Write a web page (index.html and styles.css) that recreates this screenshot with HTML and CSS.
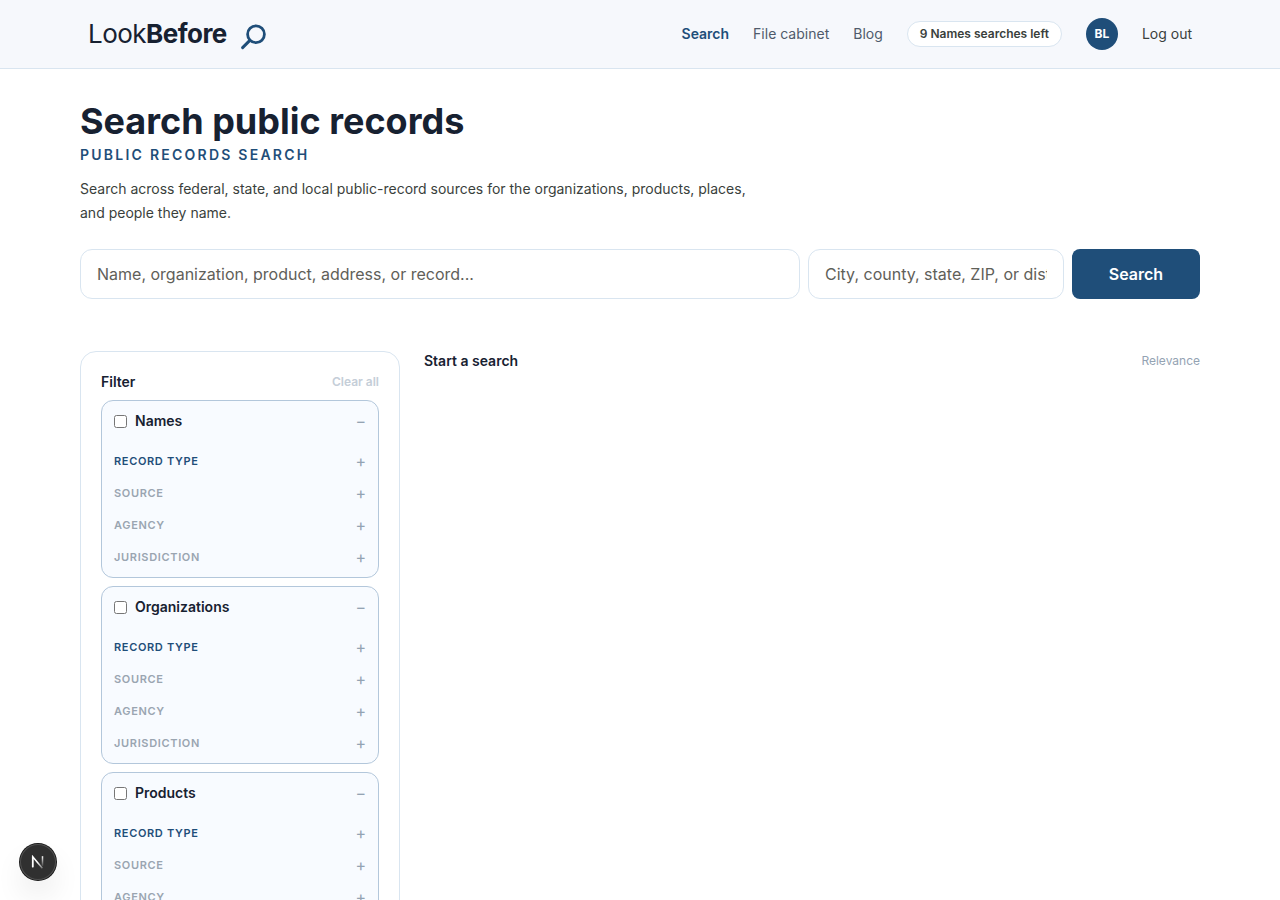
FILE: index.html
```html
<!DOCTYPE html>
<html lang="en">

<head>
    <meta charset="UTF-8">
    <meta name="viewport" content="width=device-width, initial-scale=1.0">
    <title>LookBefore</title>
    <link rel="stylesheet" href="styles.css">
</head>

<body>
    <header class="header">
        <div class="header-inner">
            <a class="logo" href="#">
                <span class="logo-text">Look<b>Before</b></span>
                <svg class="logo-icon" width="28" height="28" viewBox="0 0 28 28" fill="none" stroke="currentColor" stroke-linecap="round">
                    <circle cx="17" cy="11.2" r="8.4" stroke-width="2.8" />
                    <path d="M10.6 17.6L3.6 24.6" stroke-width="3" />
                </svg>
            </a>
            <nav class="nav">
                <a class="nav-link active" href="#">Search</a>
                <a class="nav-link" href="#">File cabinet</a>
                <a class="nav-link" href="#">Blog</a>
                <span class="quota">9 Names searches left</span>
                <span class="avatar">BL</span>
                <button class="logout" type="button">Log out</button>
            </nav>
        </div>
    </header>
    <main class="page">
        <h1 class="title">Search public records</h1>
        <p class="eyebrow">Public records search</p>
        <p class="intro">Search across federal, state, and local public-record sources for the organizations, products, places, and people they name.</p>
        <form class="search-form">
            <input class="field" type="text" placeholder="Name, organization, product, address, or record...">
            <input class="field" type="text" placeholder="City, county, state, ZIP, or district">
            <button class="search-button" type="button">Search</button>
        </form>
        <div class="content">
            <aside class="filters">
                <div class="filters-head">
                    <h2 class="heading">Filter</h2>
                    <button class="clear" type="button">Clear all</button>
                </div>
                <section class="group">
                    <div class="group-head">
                        <label class="group-label"><input class="check" type="checkbox">Names</label>
                        <span class="sign">−</span>
                    </div>
                    <div class="facet enabled">Record type<span class="sign">+</span></div>
                    <div class="facet">Source<span class="sign">+</span></div>
                    <div class="facet">Agency<span class="sign">+</span></div>
                    <div class="facet">Jurisdiction<span class="sign">+</span></div>
                </section>
                <section class="group">
                    <div class="group-head">
                        <label class="group-label"><input class="check" type="checkbox">Organizations</label>
                        <span class="sign">−</span>
                    </div>
                    <div class="facet enabled">Record type<span class="sign">+</span></div>
                    <div class="facet">Source<span class="sign">+</span></div>
                    <div class="facet">Agency<span class="sign">+</span></div>
                    <div class="facet">Jurisdiction<span class="sign">+</span></div>
                </section>
                <section class="group">
                    <div class="group-head">
                        <label class="group-label"><input class="check" type="checkbox">Products</label>
                        <span class="sign">−</span>
                    </div>
                    <div class="facet enabled">Record type<span class="sign">+</span></div>
                    <div class="facet">Source<span class="sign">+</span></div>
                    <div class="facet">Agency<span class="sign">+</span></div>
                    <div class="facet">Jurisdiction<span class="sign">+</span></div>
                </section>
            </aside>
            <section class="results">
                <h2 class="heading">Start a search</h2>
                <span class="sort">Relevance</span>
            </section>
        </div>
    </main>
    <div class="dev-badge">
        <svg width="14" height="14" viewBox="0 0 14 14" fill="none" stroke-width="1.5">
            <defs>
                <linearGradient id="fade-diagonal" x1="7" y1="7" x2="12.5" y2="14" gradientUnits="userSpaceOnUse">
                    <stop stop-color="#fff" />
                    <stop offset="1" stop-color="#fff" stop-opacity="0.2" />
                </linearGradient>
                <linearGradient id="fade-stem" x1="11" y1="1" x2="11" y2="11" gradientUnits="userSpaceOnUse">
                    <stop stop-color="#fff" />
                    <stop offset="1" stop-color="#fff" stop-opacity="0.1" />
                </linearGradient>
            </defs>
            <path d="M1.7 12.3V1.7L11.4 13.3" stroke="url(#fade-diagonal)" />
            <path d="M1.7 12.3V1.7" stroke="#fff" />
            <path d="M11.5 1.2V11" stroke="url(#fade-stem)" />
        </svg>
    </div>
</body>

</html>
```

FILE: styles.css
```css
*,
*::before,
*::after {
    box-sizing: border-box;
}

body {
    margin: 0;
    height: 100vh;
    overflow: hidden;
    background-color: #fff;
    color: #172131;
    font-family: 'Inter', sans-serif;
    font-size: 14px;
    line-height: 20px;
}

h1,
h2,
p {
    margin: 0;
}

a {
    color: inherit;
    text-decoration: none;
}

button {
    padding: 0;
    border: 0;
    background: none;
    font: inherit;
}

.header {
    height: 69px;
    background-color: #f6f8fc;
    border-bottom: 1px solid #d9e5f0;
}

.header-inner {
    display: flex;
    align-items: center;
    justify-content: space-between;
    width: 1120px;
    height: 68px;
    margin: 0 auto;
    padding: 0 8px;
}

.logo {
    display: flex;
    align-items: center;
    gap: 12px;
}

.logo-text {
    font-size: 26px;
    font-weight: 400;
    line-height: 32px;
    letter-spacing: -0.52px;
}

.logo-text b {
    font-weight: 700;
}

.logo-icon {
    margin-top: 5px;
    color: #1f4e79;
}

.nav {
    display: flex;
    align-items: center;
    gap: 24px;
}

.nav-link {
    color: #4f5b6b;
}

.nav-link.active {
    color: #1f4e79;
    font-weight: 600;
}

.quota {
    padding: 4px 12px;
    background-color: #fff;
    border: 1px solid #d9e5f0;
    border-radius: 13px;
    color: #3a3f3c;
    font-size: 12px;
    font-weight: 600;
    line-height: 16px;
}

.avatar {
    width: 32px;
    height: 32px;
    border-radius: 50%;
    background-color: #1f4e79;
    color: #fff;
    font-size: 12px;
    font-weight: 700;
    line-height: 32px;
    text-align: center;
}

.logout {
    color: #3a3f3c;
}

.page {
    width: 1120px;
    margin: 0 auto;
    padding-top: 32px;
}

.title {
    font-size: 36px;
    font-weight: 700;
    line-height: 40px;
}

.eyebrow {
    margin-top: 4px;
    color: #1f4e79;
    font-weight: 600;
    letter-spacing: 2.24px;
    text-transform: uppercase;
}

.intro {
    width: 672px;
    margin-top: 12px;
    color: #3a3f3c;
    line-height: 24px;
}

.search-form {
    display: grid;
    grid-template-columns: 720px 256px 128px;
    gap: 8px;
    margin-top: 24px;
}

.field {
    width: 100%;
    height: 50px;
    padding: 0 16px;
    border: 1px solid #d9e5f0;
    border-radius: 12px;
    background-color: #fff;
    font-family: inherit;
    font-size: 16px;
}

.field::placeholder {
    color: #5f6059;
}

.search-button {
    border-radius: 8px;
    background-color: #1f4e79;
    color: #fff;
    font-size: 16px;
    font-weight: 600;
}

.content {
    display: grid;
    grid-template-columns: 320px 1fr;
    gap: 24px;
    margin-top: 52px;
}

.filters {
    display: flex;
    flex-direction: column;
    gap: 8px;
    padding: 20px;
    border: 1px solid #d9e5f0;
    border-radius: 16px;
}

.filters-head,
.results,
.group-head,
.facet {
    display: flex;
    align-items: center;
    justify-content: space-between;
}

.heading {
    font-size: 14px;
    font-weight: 600;
    line-height: 20px;
}

.clear {
    color: #c5ced8;
    font-size: 12px;
    font-weight: 600;
}

.group {
    padding: 0 12px 4px;
    background-color: #f8fbff;
    border: 1px solid #b3c7db;
    border-radius: 12px;
}

.group-head {
    height: 40px;
    margin-bottom: 4px;
}

.group-label {
    display: flex;
    align-items: center;
    gap: 8px;
    font-weight: 600;
}

.check {
    width: 13px;
    height: 13px;
    margin: 0;
}

.facet {
    height: 32px;
    color: #9aa5b1;
    font-size: 11px;
    font-weight: 600;
    letter-spacing: 0.66px;
    text-transform: uppercase;
}

.facet.enabled {
    color: #1f4e79;
}

.sign {
    color: #94a3b3;
    font-size: 16px;
    font-weight: 400;
    letter-spacing: 0;
}

.results {
    align-self: start;
}

.sort {
    color: #94a3b3;
    font-size: 12px;
}

.dev-badge {
    position: fixed;
    left: 20px;
    bottom: 20px;
    display: flex;
    align-items: center;
    justify-content: center;
    width: 36px;
    height: 36px;
    border-radius: 50%;
    background-color: #303030;
    box-shadow: 0 0 0 1px #171717, inset 0 0 0 1px #505050, 0 16px 32px -8px rgba(0, 0, 0, 0.24);
}
```
